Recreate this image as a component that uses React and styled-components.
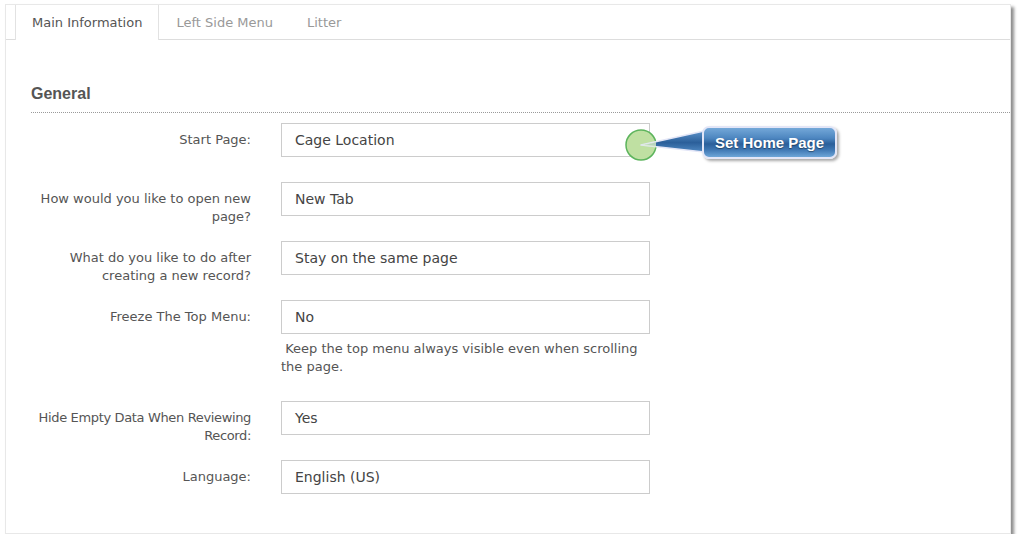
import React from 'react';
import styled, { createGlobalStyle } from 'styled-components';

const GlobalStyle = createGlobalStyle`
  html, body {
    margin: 0;
    padding: 0;
    background: #ffffff;
  }
  body {
    font-family: 'DejaVu Sans', Verdana, sans-serif;
  }
`;

const Panel = styled.div`
  box-sizing: border-box;
  margin: 4px 0 0 5px;
  width: 1006px;
  height: 530px;
  background: #fff;
  border: 1px solid #e8e8e8;
  box-shadow: 3px 3px 3px rgba(0, 0, 0, 0.45);
`;

const TabBar = styled.div`
  display: flex;
  height: 34px;
  padding-left: 9px;
  border-bottom: 1px solid #dddddd;
`;

const Tab = styled.div`
  display: flex;
  align-items: center;
  padding: 0 16px;
  font-size: 13px;
  color: ${(props) => (props.active ? '#555555' : '#999999')};
  background: #fff;
  border-left: 1px solid ${(props) => (props.active ? '#e2e2e2' : 'transparent')};
  border-right: 1px solid ${(props) => (props.active ? '#e2e2e2' : 'transparent')};
  margin-bottom: ${(props) => (props.active ? '-1px' : '0')};
  height: ${(props) => (props.active ? '35px' : '34px')};
  box-sizing: border-box;
`;

const Body = styled.div`
  padding: 44px 0 0 25px;
`;

const Heading = styled.h3`
  margin: 0;
  padding-bottom: 9px;
  font-family: 'Liberation Sans', Arial, sans-serif;
  font-size: 16px;
  line-height: 19px;
  font-weight: bold;
  color: #555;
  border-bottom: 1px dotted #9a9a9a;
`;

const Form = styled.div`
  display: grid;
  grid-template-columns: 222px 369px;
  column-gap: 30px;
  row-gap: 25px;
  margin-top: 10px;
  margin-left: -2px;
`;

const Label = styled.div`
  box-sizing: border-box;
  height: 34px;
  padding-top: 8px;
  text-align: right;
  font-size: 13px;
  line-height: 18px;
  color: #555;
  letter-spacing: ${(props) => (props.tight ? '-0.35px' : 'normal')};
`;

const Field = styled.div`
  position: relative;
`;

const Input = styled.div`
  box-sizing: border-box;
  height: 34px;
  padding: 0 13px;
  display: flex;
  align-items: center;
  border: 1px solid #cccccc;
  font-size: 14px;
  color: #444;
  background: #fff;
`;

const Help = styled.div`
  margin-top: 6px;
  font-size: 13px;
  line-height: 18px;
  color: #555;
`;

const Marker = styled.svg`
  position: absolute;
  left: 344px;
  top: 4px;
  overflow: visible;
`;

const Callout = styled.div`
  position: absolute;
  left: 421px;
  top: 3px;
  width: 135px;
  height: 33px;
  box-sizing: border-box;
  border: 2px solid #e3e6f7;
  border-radius: 7px;
  background: linear-gradient(
    to bottom,
    #74a8d8 0%,
    #4d86c0 35%,
    #2b5f9a 55%,
    #3f77b3 75%,
    #6ea6d8 100%
  );
  box-shadow: 2px 2px 3px rgba(0, 0, 0, 0.35);
  display: flex;
  align-items: center;
  justify-content: center;
  font-family: 'Liberation Sans', Arial, sans-serif;
  font-weight: bold;
  font-size: 15px;
  color: #fff;
  text-shadow: 0 1px 1px rgba(0, 0, 0, 0.4);
`;

const rows = [
  { label: 'Start Page:', value: 'Cage Location', callout: true },
  { label: 'How would you like to open new page?', value: 'New Tab' },
  { label: 'What do you like to do after creating a new record?', value: 'Stay on the same page' },
  {
    label: 'Freeze The Top Menu:',
    value: 'No',
    help: '\u00a0Keep the top menu always visible even when scrolling the page.',
  },
  { label: 'Hide Empty Data When Reviewing Record:', value: 'Yes', tight: true },
  { label: 'Language:', value: 'English (US)' },
];

function HomeMarker() {
  return (
    <Marker width="80" height="36" viewBox="0 0 80 36">
      <defs>
        <linearGradient id="tail" x1="0" y1="0" x2="0" y2="1">
          <stop offset="0" stopColor="#5b92c9" />
          <stop offset="0.55" stopColor="#2b5f9a" />
          <stop offset="1" stopColor="#4f88c2" />
        </linearGradient>
      </defs>
      <circle cx="16" cy="18" r="15" fill="#bfe0a2" stroke="#5cb45c" strokeWidth="1.5" />
      <polygon
        points="16,18 79,4 79,25"
        fill="url(#tail)"
        stroke="#e3e6f7"
        strokeWidth="1.5"
        strokeLinejoin="round"
      />
      <polygon points="16,18 31,15 31,20" fill="#d9efc6" opacity="0.8" />
    </Marker>
  );
}

export default function App() {
  return (
    <>
      <GlobalStyle />
      <Panel>
        <TabBar>
          <Tab active>Main Information</Tab>
          <Tab>Left Side Menu</Tab>
          <Tab>Litter</Tab>
        </TabBar>
        <Body>
          <Heading>General</Heading>
          <Form>
            {rows.map((row) => (
              <React.Fragment key={row.label}>
                <Label tight={row.tight}>{row.label}</Label>
                <Field>
                  <Input>{row.value}</Input>
                  {row.help && <Help>{row.help}</Help>}
                  {row.callout && (
                    <>
                      <HomeMarker />
                      <Callout>Set Home Page</Callout>
                    </>
                  )}
                </Field>
              </React.Fragment>
            ))}
          </Form>
        </Body>
      </Panel>
    </>
  );
}
